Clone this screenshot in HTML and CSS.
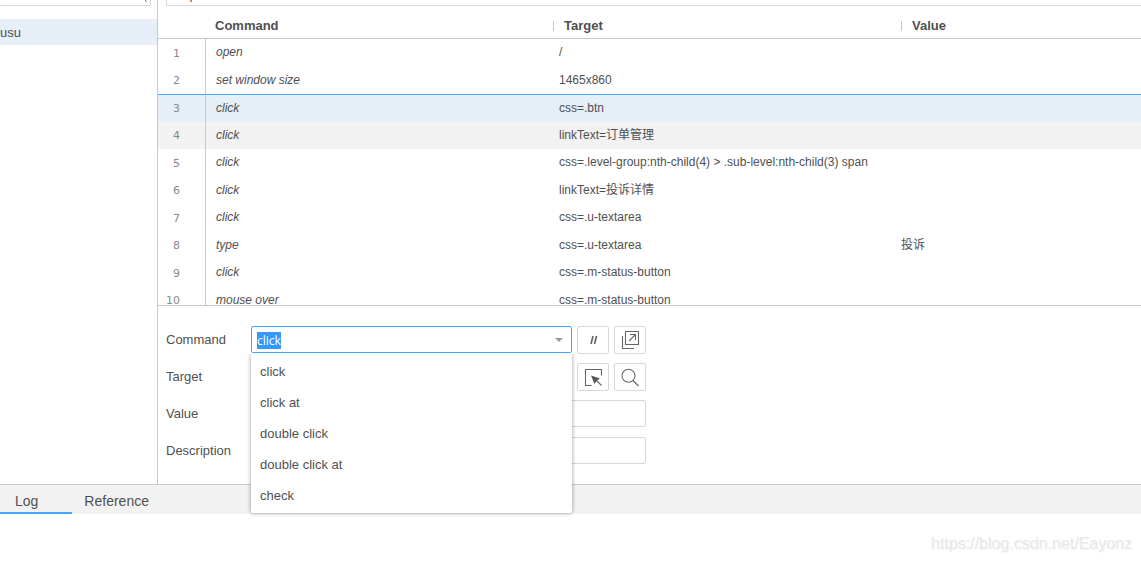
FILE: index.html
```html
<!DOCTYPE html>
<html lang="en">
<head>
<meta charset="utf-8">
<title>Test editor</title>
<link rel="stylesheet" href="styles.css">
</head>
<body>
<div class="workspace">
  <aside class="sidebar">
    <div class="search">
      <input class="search-input" type="search" aria-label="Search tests">
      <svg class="search-icon" width="14" height="14" viewBox="0 0 14 14"><circle cx="5" cy="5" r="4"/><path d="M8 8l5 5"/></svg>
    </div>
    <a class="test" href="#">usu</a>
  </aside>
  <main class="editor">
    <div class="url-bar"><input class="url-input" type="text" value="http://" aria-label="Base URL"></div>
    <div class="steps">
      <table class="step-table">
        <colgroup><col class="col-number"><col class="col-command"><col class="col-target"><col></colgroup>
        <thead>
          <tr><th></th><th class="th-command">Command</th><th class="th-target"><span class="divided">Target</span></th><th class="th-value"><span class="divided">Value</span></th></tr>
        </thead>
        <tbody>
          <tr><td class="number">1</td><td class="command">open</td><td>/</td><td></td></tr>
          <tr><td class="number">2</td><td class="command">set window size</td><td>1465x860</td><td></td></tr>
          <tr class="selected"><td class="number">3</td><td class="command">click</td><td>css=.btn</td><td></td></tr>
          <tr class="hovered"><td class="number">4</td><td class="command">click</td><td>linkText=订单管理</td><td></td></tr>
          <tr><td class="number">5</td><td class="command">click</td><td>css=.level-group:nth-child(4) &gt; .sub-level:nth-child(3) span</td><td></td></tr>
          <tr><td class="number">6</td><td class="command">click</td><td>linkText=投诉详情</td><td></td></tr>
          <tr><td class="number">7</td><td class="command">click</td><td>css=.u-textarea</td><td></td></tr>
          <tr><td class="number">8</td><td class="command">type</td><td>css=.u-textarea</td><td>投诉</td></tr>
          <tr><td class="number">9</td><td class="command">click</td><td>css=.m-status-button</td><td></td></tr>
          <tr><td class="number">10</td><td class="command">mouse over</td><td>css=.m-status-button</td><td></td></tr>
        </tbody>
      </table>
    </div>
    <form class="form">
      <div class="row">
        <label class="label" for="command">Command</label>
        <div class="combo">
          <input class="field focused" id="command" type="text" value="click" autocomplete="off" autofocus>
          <svg class="caret" width="8" height="4" viewBox="0 0 8 4"><path d="M0 0h8L4 4z"/></svg>
          <ul class="menu">
            <li class="option">click</li>
            <li class="option">click at</li>
            <li class="option">double click</li>
            <li class="option">double click at</li>
            <li class="option">check</li>
          </ul>
        </div>
        <button class="tool" type="button" aria-label="Toggle comment">
          <svg width="20" height="20" viewBox="0 0 20 20"><path class="heavy" d="M8 14L10 6M11.500 14L13.500 6"/></svg>
        </button>
        <button class="tool" type="button" aria-label="Open in new window">
          <svg width="20" height="20" viewBox="0 0 20 20"><path d="M5.500 1.500h13v13h-13zM2.500 6v12.500H14M9 11l6-6M10 4.500h5.500V10"/></svg>
        </button>
      </div>
      <div class="row">
        <label class="label" for="target">Target</label>
        <input class="field target-field" id="target" type="text">
        <button class="tool" type="button" aria-label="Select target in page">
          <svg width="20" height="20" viewBox="0 0 20 20"><path d="M8.500 18.500h-6v-16h16v6M12 12l6.500 6.500"/><path class="solid" d="M8 8.500l9 3-3.300 2-2.200 3.500z"/></svg>
        </button>
        <button class="tool" type="button" aria-label="Find target in page">
          <svg width="20" height="20" viewBox="0 0 20 20"><circle cx="8.500" cy="8.800" r="6.500"/><path d="M13 13.500l5.500 5.500"/></svg>
        </button>
      </div>
      <div class="row">
        <label class="label" for="value">Value</label>
        <input class="field wide" id="value" type="text">
      </div>
      <div class="row">
        <label class="label" for="description">Description</label>
        <input class="field wide" id="description" type="text">
      </div>
    </form>
  </main>
</div>
<section class="console">
  <nav class="tabs">
    <button class="tab active" type="button">Log</button>
    <button class="tab" type="button">Reference</button>
  </nav>
  <div class="log"><span class="watermark">https://blog.csdn.net/Eayonz</span></div>
</section>
<script src="editor.js"></script>
</body>
</html>
```

FILE: styles.css
```css
* { box-sizing: border-box; }

body {
  margin: 0;
  height: 100vh;
  display: flex;
  flex-direction: column;
  overflow: hidden;
  background: #fff;
  color: #505050;
  font: 13px/16px "Liberation Sans", "Noto Sans CJK SC", sans-serif;
}

button, input { font: inherit; color: inherit; margin: 0; }

.workspace { flex: 1; min-height: 0; display: flex; }

.sidebar { width: 158px; flex: none; border-right: 1px solid #c8c8c8; }

.search {
  height: 6px;
  margin: 0 6px 13px 0;
  display: flex;
  align-items: flex-end;
  overflow: hidden;
  position: relative;
}
.search-input {
  width: 100%;
  height: 28px;
  flex: none;
  border: 1px solid #d8d8d8;
  border-left: 0;
  border-radius: 2px;
}
.search-icon {
  position: absolute;
  right: 3px;
  bottom: 3px;
  fill: none;
  stroke: #777;
}

.test {
  display: block;
  padding: 6px 0 4px;
  background: #e6eff7;
  color: inherit;
  text-decoration: none;
}

.editor { flex: 1; min-width: 0; display: flex; flex-direction: column; }

.url-bar {
  height: 6px;
  flex: none;
  padding-left: 8px;
  display: flex;
  align-items: flex-end;
  overflow: hidden;
}
.url-input {
  width: 100%;
  height: 28px;
  flex: none;
  padding: 4px 8px 0;
  border: 1px solid #d8d8d8;
  border-right: 0;
  border-radius: 2px 0 0 2px;
}

.steps { flex: 1; min-height: 0; overflow: hidden; border-bottom: 1px solid #c8c8c8; }

.step-table {
  width: 100%;
  table-layout: fixed;
  border-collapse: separate;
  border-spacing: 0;
  font-size: 12px;
}
.col-number { width: 48px; }
.col-command { width: 343px; }
.col-target { width: 342px; }

th {
  height: 33px;
  padding: 8px 0 0;
  border-bottom: 1px solid #c8c8c8;
  font-size: 13px;
  line-height: 16px;
  text-align: left;
}
.th-command { padding-left: 9px; }
.th-target { padding-left: 4px; }
.th-value { padding-left: 10px; }
.divided {
  display: flex;
  align-items: center;
}
.divided::before {
  content: "";
  height: 10px;
  margin-right: 10px;
  border-left: 1px solid #c8c8c8;
}

td {
  height: 28px;
  padding: 0 0 2px 10px;
  line-height: 16px;
  white-space: nowrap;
}
tr:nth-child(even) td { height: 27px; }
.number {
  padding: 1px 25px 0 0;
  border-right: 1px solid #c8c8c8;
  color: #888;
  font: 11px/16px "DejaVu Sans", sans-serif;
  text-align: right;
}
.command { font-style: italic; }
.selected td { background: #e6eff7; border-top: 1px solid #40a6ff; }
.hovered td { background: #f2f2f2; }

.form {
  flex: none;
  display: flex;
  flex-direction: column;
  gap: 9px;
  padding: 20px 8px 19px;
}
.row { display: flex; align-items: flex-start; gap: 5px; height: 28px; }
.label { width: 80px; flex: none; line-height: 28px; }
.combo { position: relative; width: 321px; height: 28px; }
.field {
  width: 100%;
  height: 27px;
  display: block;
  padding: 1px 5px 0;
  border: 1px solid #d8d8d8;
  border-radius: 2px;
  outline: 0;
  background: #fff;
  font: 12px/16px "Open Sans", sans-serif;
}
.target-field { width: 321px; }
.wide { width: 395px; }
.focused { border-color: #40a6ff; }
.field::selection { background: #3399ff; color: #fff; }
.caret { position: absolute; right: 9px; top: 12px; fill: #999; }

.menu {
  position: absolute;
  z-index: 1;
  top: 28px;
  left: 0;
  right: 0;
  margin: 0;
  padding: 2px 0;
  list-style: none;
  background: #fff;
  border-radius: 2px;
  box-shadow: 0 0 4px rgba(0, 0, 0, 0.4);
  clip-path: inset(0 -6px -6px -6px);
}
.option { padding: 8px 9px 7px; }

.tool {
  width: 32px;
  height: 28px;
  flex: none;
  display: flex;
  align-items: center;
  justify-content: center;
  padding: 0;
  border: 1px solid #d8d8d8;
  border-radius: 2px;
  background: #fff;
}
.tool svg { fill: none; stroke: #666; stroke-width: 1.1; }
.tool .heavy { stroke-width: 1.7; }
.tool .solid { fill: #555; stroke: none; }

.console { flex: none; border-top: 1px solid #c8c8c8; }
.tabs { display: flex; height: 29px; background: #f2f2f2; }
.tab {
  padding: 4px 12px 0;
  border: 0;
  border-bottom: 2px solid transparent;
  background: none;
  font-size: 14px;
}
.active { padding: 4px 34px 0 15px; border-bottom-color: #40a6ff; }

.log { height: 48px; display: flex; justify-content: flex-end; padding: 21px 9px 0 0; }
.watermark {
  color: #e8e8e8;
  font-size: 16px;
  line-height: 18px;
  text-shadow: 1px 1px 0 #f6f6f6;
}
```

FILE: editor.js
```js
const command = document.getElementById("command");
command.focus();
command.select();
```
